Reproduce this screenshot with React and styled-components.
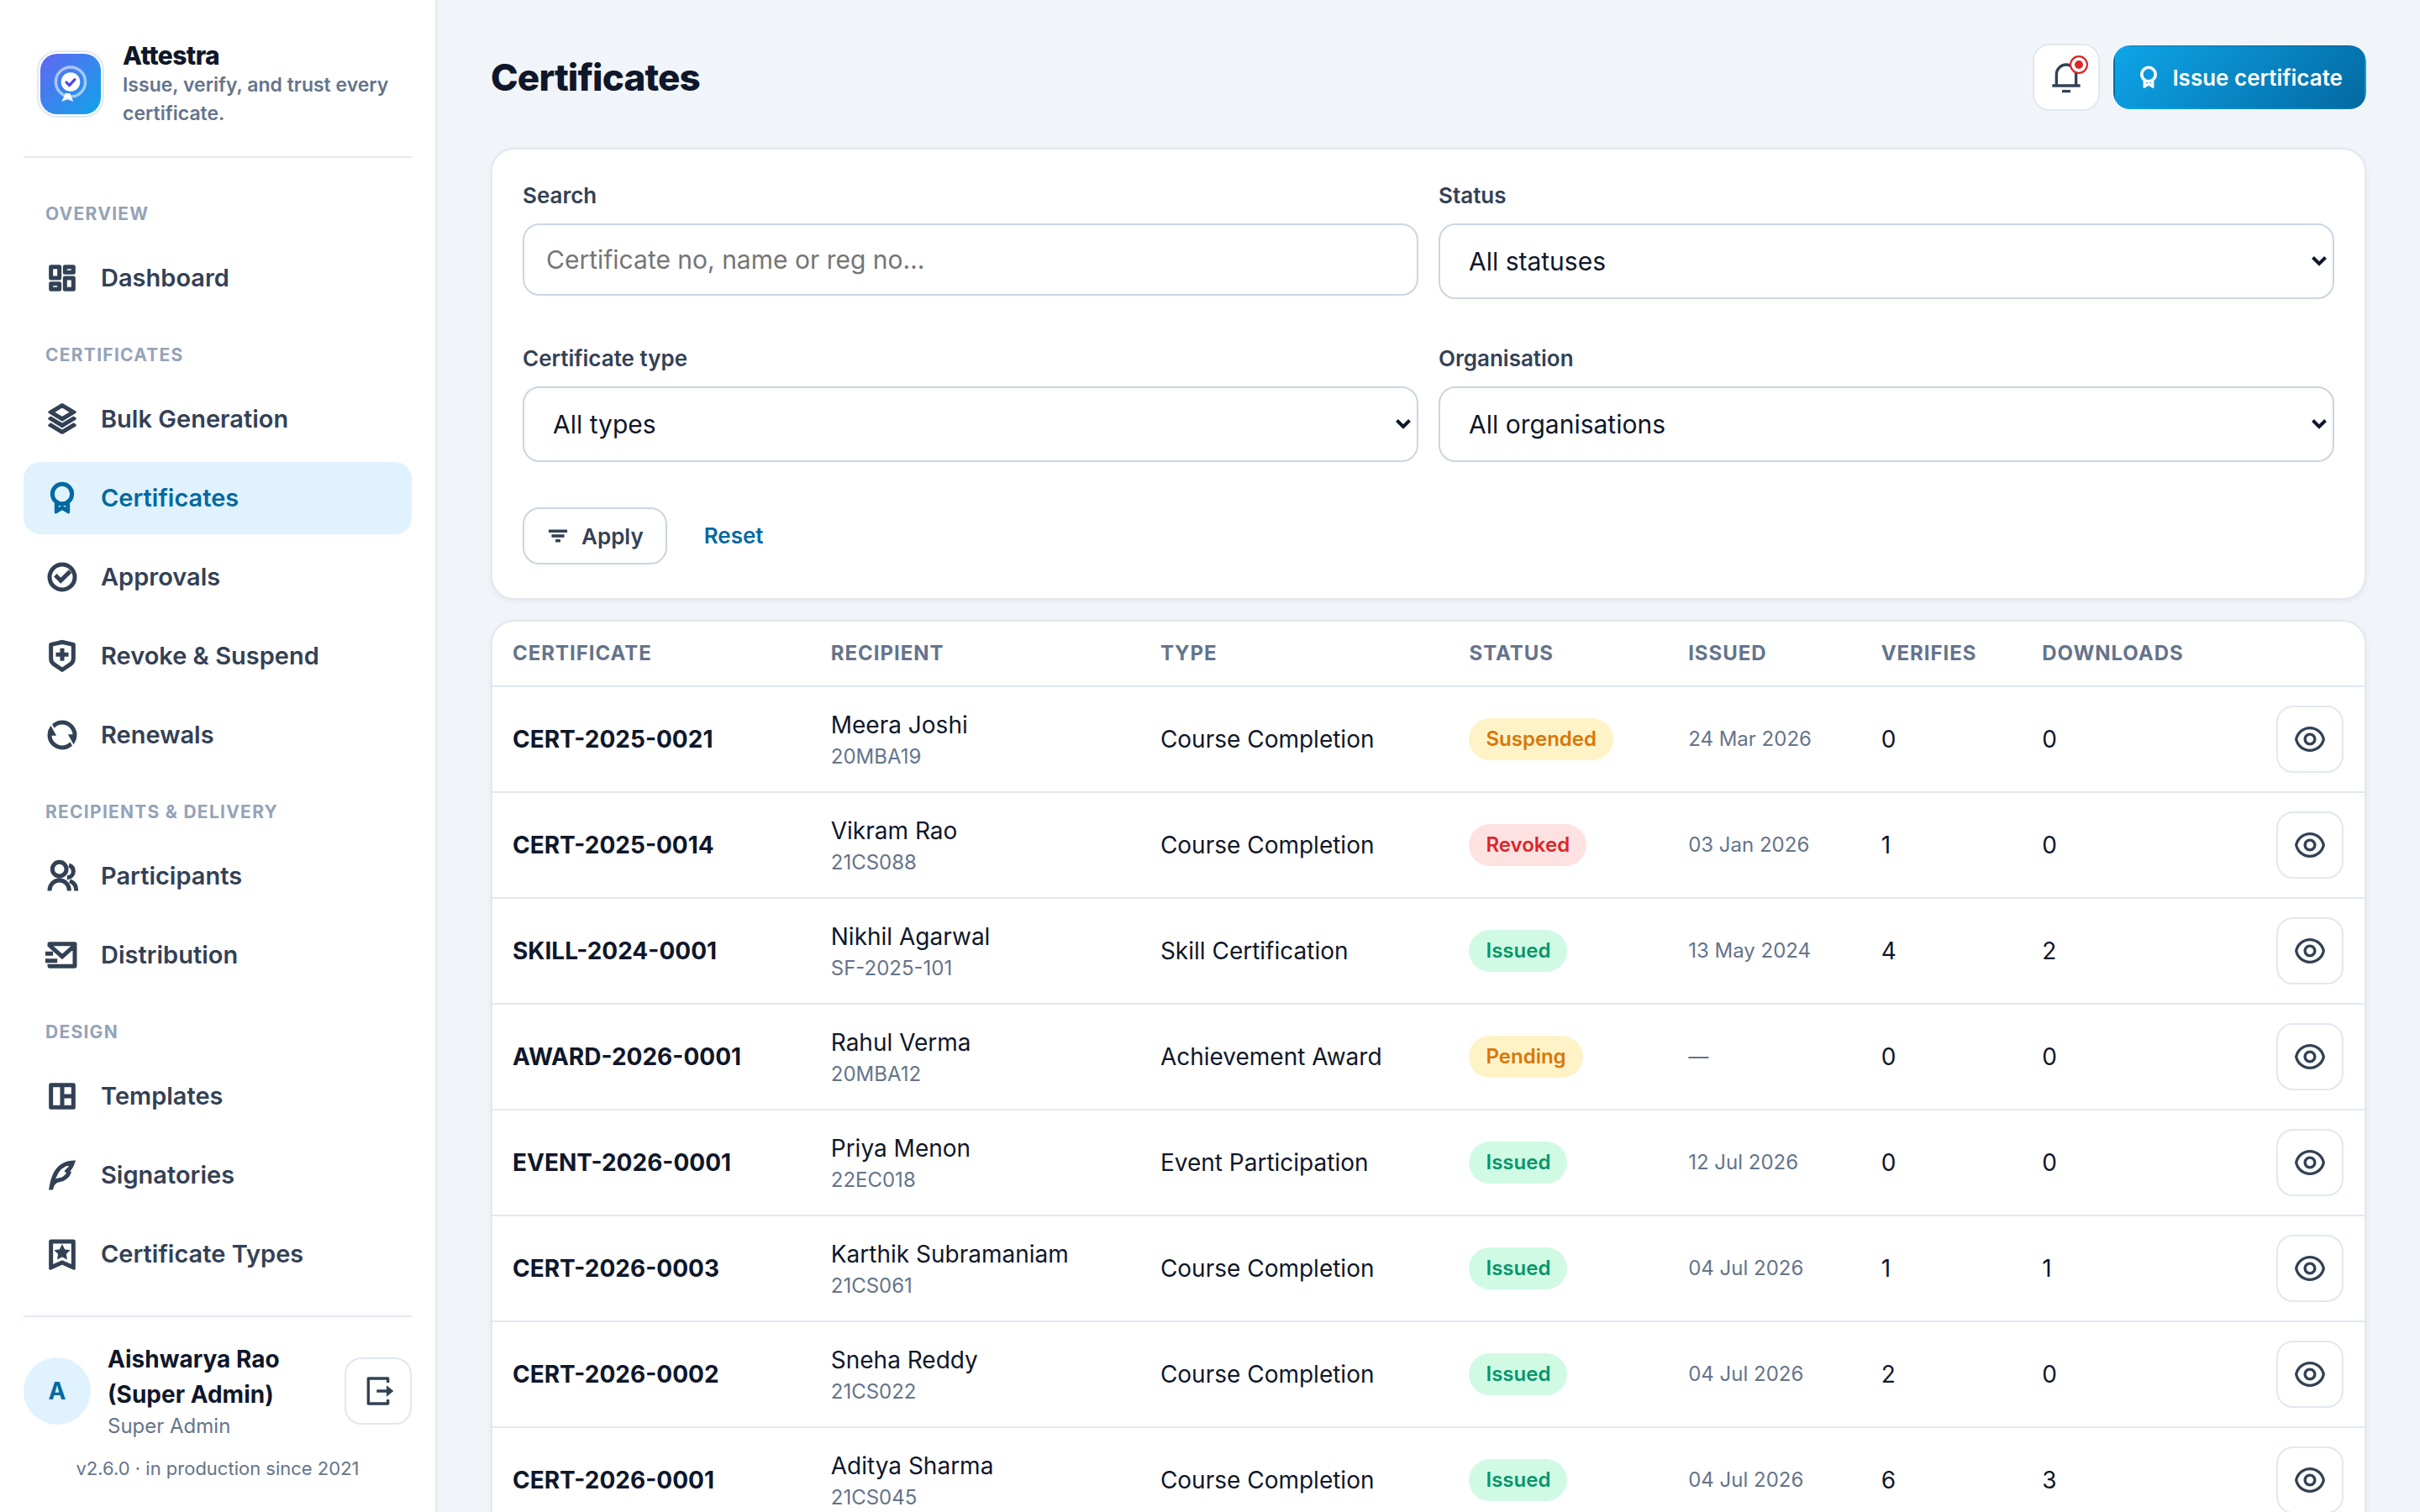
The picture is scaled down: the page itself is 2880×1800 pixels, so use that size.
import React from "react";
import styled, { createGlobalStyle } from "styled-components";
import {
  RiAwardLine,
  RiBookmark3Line,
  RiCheckboxCircleLine,
  RiDashboardLine,
  RiEyeLine,
  RiFilter3Line,
  RiGroupLine,
  RiLogoutBoxRLine,
  RiMailSendLine,
  RiNotification3Line,
  RiQuillPenLine,
  RiRefreshLine,
  RiShieldCrossLine,
  RiStackLine,
} from "react-icons/ri";

const GlobalStyle = createGlobalStyle`
  * {
    box-sizing: border-box;
  }

  body {
    margin: 0;
    background: #f1f5f9;
    color: #0f172a;
    font-family: Inter, "Liberation Sans", sans-serif;
    font-size: 28px;
    line-height: 42px;
  }

  button,
  input,
  select {
    font-family: inherit;
  }
`;

const Shell = styled.div`
  display: flex;
  height: 100vh;
`;

const Sidebar = styled.aside`
  display: flex;
  flex-direction: column;
  flex: 0 0 520px;
  padding: 0 28px 35px;
  background: #fff;
  border-right: 2px solid #e2e8f0;
`;

const Brand = styled.div`
  display: flex;
  align-items: center;
  gap: 22px;
  padding: 48px 16px 34px;
  border-bottom: 2px solid #e2e8f0;
`;

const BrandLogo = styled.div`
  flex: none;
  width: 80px;
  height: 80px;
  padding: 2px;
  border: 2px solid #e2e8f0;
  border-radius: 24px;

  svg {
    display: block;
    width: 100%;
    height: 100%;
  }
`;

const BrandName = styled.div`
  font-size: 30px;
  font-weight: 800;
  line-height: 36px;
  letter-spacing: -0.02em;
`;

const BrandTagline = styled.div`
  color: #64748b;
  font-size: 23px;
  font-weight: 600;
  line-height: 34px;
`;

const Nav = styled.nav`
  flex: 1;
  min-height: 0;
  padding-top: 18px;
  overflow: hidden;
`;

const NavLabel = styled.h2`
  margin: 36px 26px 20px;
  color: #94a3b8;
  font-size: 21px;
  font-weight: 700;
  line-height: 26px;
  letter-spacing: 0.06em;
  text-transform: uppercase;
`;

const NavList = styled.ul`
  display: grid;
  gap: 8px;
  margin: 0;
  padding: 0;
  list-style: none;
`;

const NavLink = styled.a`
  display: flex;
  align-items: center;
  gap: 26px;
  height: 86px;
  padding: 0 26px;
  border-radius: 20px;
  background: ${(p) => (p.$active ? "#e0f2fe" : "transparent")};
  color: ${(p) => (p.$active ? "#0369a1" : "#334155")};
  font-size: 29px;
  font-weight: 600;
  text-decoration: none;

  svg {
    flex: none;
    width: 40px;
    height: 40px;
    stroke-width: 1;
  }
`;

const SidebarFooter = styled.div`
  padding-top: 29px;
  border-top: 2px solid #e2e8f0;
`;

const UserRow = styled.div`
  display: flex;
  align-items: center;
  gap: 20px;
`;

const Avatar = styled.div`
  display: grid;
  place-items: center;
  flex: none;
  width: 80px;
  height: 80px;
  border-radius: 50%;
  background: #e0f2fe;
  color: #0369a1;
  font-weight: 700;
`;

const UserInfo = styled.div`
  flex: 1;
`;

const UserName = styled.div`
  font-weight: 700;
`;

const SmallMuted = styled.div`
  color: #64748b;
  font-size: 24px;
  line-height: 34px;
`;

const Version = styled.div`
  margin-top: 16px;
  color: #64748b;
  font-size: 22px;
  line-height: 34px;
  text-align: center;
`;

const IconButton = styled.button`
  position: relative;
  display: grid;
  place-items: center;
  flex: none;
  width: 80px;
  height: 80px;
  padding: 0;
  border: 2px solid #e2e8f0;
  border-radius: 20px;
  background: #fff;
  color: #334155;
  cursor: pointer;

  svg {
    width: 40px;
    height: 40px;
  }
`;

const UnreadDot = styled.span`
  position: absolute;
  top: 12px;
  right: 12px;
  width: 22px;
  height: 22px;
  border: 2px solid #dc2626;
  border-radius: 50%;
  background: #dc2626;
  box-shadow: inset 0 0 0 4px #fff;
`;

const Main = styled.main`
  flex: 1;
  min-width: 0;
  padding: 52px 64px;
  overflow-y: auto;
  scrollbar-width: none;
`;

const TopBar = styled.header`
  display: flex;
  align-items: center;
  gap: 16px;
  margin-bottom: 44px;
`;

const PageTitle = styled.h1`
  flex: 1;
  margin: 0;
  font-size: 44px;
  font-weight: 800;
  line-height: 56px;
  letter-spacing: -0.02em;
`;

const Button = styled.button`
  display: inline-flex;
  align-items: center;
  gap: 14px;
  height: ${(p) => (p.$primary ? "76px" : "68px")};
  padding: 0 26px;
  border: 2px solid ${(p) => (p.$primary ? "transparent" : "#cbd5e1")};
  border-radius: 20px;
  background: ${(p) =>
    p.$primary ? "linear-gradient(135deg, #0ea5e9, #0369a1)" : "#fff"};
  color: ${(p) => (p.$primary ? "#fff" : "#334155")};
  font-size: 26px;
  font-weight: 600;
  cursor: pointer;

  svg {
    width: 28px;
    height: 28px;
    stroke-width: 1;
  }
`;

const ResetLink = styled.a`
  padding: 0 28px;
  color: #0369a1;
  font-size: 26px;
  font-weight: 600;
  text-decoration: none;
`;

const Card = styled.section`
  border: 2px solid #e2e8f0;
  border-radius: 28px;
  background: #fff;
  box-shadow: 0 2px 6px rgba(15, 23, 42, 0.06);
`;

const FilterCard = styled(Card)`
  margin-bottom: 24px;
  padding: 34px 36px 40px;
`;

const FilterGrid = styled.div`
  display: grid;
  grid-template-columns: 1fr 1fr;
  gap: 50px 24px;
`;

const Field = styled.div`
  display: flex;
  flex-direction: column;
  gap: 12px;
`;

const FieldLabel = styled.label`
  color: #334155;
  font-size: 26px;
  font-weight: 600;
`;

const TextInput = styled.input`
  height: 86px;
  padding: 0 26px;
  border: 2px solid #cbd5e1;
  border-radius: 20px;
  background: #fff;
  color: #0f172a;
  font-size: 30px;

  &::placeholder {
    color: #757575;
  }
`;

const SelectBox = styled.div`
  display: grid;
  align-items: center;

  > * {
    grid-area: 1 / 1;
  }

  svg {
    justify-self: end;
    width: 20px;
    height: 14px;
    margin-right: 8px;
    pointer-events: none;
  }
`;

const SelectInput = styled.select`
  width: 100%;
  height: 90px;
  padding: 0 34px;
  appearance: none;
  border: 2px solid #cbd5e1;
  border-radius: 20px;
  background: #fff;
  color: #0f172a;
  font-size: 30px;
`;

const FilterActions = styled.div`
  display: flex;
  align-items: center;
  gap: 16px;
  margin-top: 54px;
`;

const TableCard = styled(Card)`
  overflow: hidden;
`;

const Table = styled.table`
  width: 100%;
  table-layout: fixed;
  border-collapse: collapse;
`;

const Col = styled.col`
  width: ${(p) => p.$width};
`;

const HeadCell = styled.th`
  height: 77px;
  padding: 0 24px;
  border-bottom: 2px solid #e2e8f0;
  color: #64748b;
  font-size: 24px;
  font-weight: 700;
  letter-spacing: 0.04em;
  text-align: left;
  text-transform: uppercase;
`;

const Cell = styled.td`
  height: 126px;
  padding: 0 24px;
  border-bottom: 2px solid #e2e8f0;
  font-weight: ${(p) => (p.$strong ? 700 : 400)};
  white-space: nowrap;
`;

const statusColors = {
  Issued: ["#d1fae5", "#059669"],
  Pending: ["#fef3c7", "#d97706"],
  Suspended: ["#fef3c7", "#d97706"],
  Revoked: ["#fee2e2", "#dc2626"],
};

const StatusPill = styled.span`
  display: inline-block;
  padding: 8px 20px;
  border-radius: 25px;
  background: ${(p) => statusColors[p.$status][0]};
  color: ${(p) => statusColors[p.$status][1]};
  font-size: 24px;
  font-weight: 600;
  line-height: 34px;
  vertical-align: middle;
`;

// full-height left column, split right column
function TemplateIcon() {
  return (
    <svg viewBox="0 0 24 24" fill="currentColor" stroke="currentColor" aria-hidden="true">
      <path
        fillRule="evenodd"
        d="M4 3h16a1 1 0 0 1 1 1v16a1 1 0 0 1-1 1H4a1 1 0 0 1-1-1V4a1 1 0 0 1 1-1zM5 5v14h6V5H5zM13 5v6h6V5h-6zM13 13v6h6v-6h-6z"
      />
    </svg>
  );
}

const navSections = [
  {
    label: "Overview",
    items: [{ label: "Dashboard", icon: RiDashboardLine }],
  },
  {
    label: "Certificates",
    items: [
      { label: "Bulk Generation", icon: RiStackLine },
      { label: "Certificates", icon: RiAwardLine, active: true },
      { label: "Approvals", icon: RiCheckboxCircleLine },
      { label: "Revoke & Suspend", icon: RiShieldCrossLine },
      { label: "Renewals", icon: RiRefreshLine },
    ],
  },
  {
    label: "Recipients & Delivery",
    items: [
      { label: "Participants", icon: RiGroupLine },
      { label: "Distribution", icon: RiMailSendLine },
    ],
  },
  {
    label: "Design",
    items: [
      { label: "Templates", icon: TemplateIcon },
      { label: "Signatories", icon: RiQuillPenLine },
      { label: "Certificate Types", icon: RiBookmark3Line },
    ],
  },
];

const columns = [
  { title: "Certificate", width: "17%" },
  { title: "Recipient", width: "17.6%" },
  { title: "Type", width: "16.5%" },
  { title: "Status", width: "11.7%" },
  { title: "Issued", width: "10.3%" },
  { title: "Verifies", width: "8.6%" },
  { title: "Downloads", width: "12.5%" },
  { title: "", width: "5.8%" },
];

const certificates = [
  { no: "CERT-2025-0021", name: "Meera Joshi", reg: "20MBA19", type: "Course Completion", status: "Suspended", issued: "24 Mar 2026", verifies: 0, downloads: 0 },
  { no: "CERT-2025-0014", name: "Vikram Rao", reg: "21CS088", type: "Course Completion", status: "Revoked", issued: "03 Jan 2026", verifies: 1, downloads: 0 },
  { no: "SKILL-2024-0001", name: "Nikhil Agarwal", reg: "SF-2025-101", type: "Skill Certification", status: "Issued", issued: "13 May 2024", verifies: 4, downloads: 2 },
  { no: "AWARD-2026-0001", name: "Rahul Verma", reg: "20MBA12", type: "Achievement Award", status: "Pending", issued: "—", verifies: 0, downloads: 0 },
  { no: "EVENT-2026-0001", name: "Priya Menon", reg: "22EC018", type: "Event Participation", status: "Issued", issued: "12 Jul 2026", verifies: 0, downloads: 0 },
  { no: "CERT-2026-0003", name: "Karthik Subramaniam", reg: "21CS061", type: "Course Completion", status: "Issued", issued: "04 Jul 2026", verifies: 1, downloads: 1 },
  { no: "CERT-2026-0002", name: "Sneha Reddy", reg: "21CS022", type: "Course Completion", status: "Issued", issued: "04 Jul 2026", verifies: 2, downloads: 0 },
  { no: "CERT-2026-0001", name: "Aditya Sharma", reg: "21CS045", type: "Course Completion", status: "Issued", issued: "04 Jul 2026", verifies: 6, downloads: 3 },
];

function Logo() {
  return (
    <svg viewBox="0 0 72 72" aria-hidden="true">
      <defs>
        <linearGradient id="logo-fill" x1="0" y1="0" x2="1" y2="1">
          <stop offset="0" stopColor="#6366f1" />
          <stop offset="1" stopColor="#0ea5e9" />
        </linearGradient>
      </defs>
      <rect width="72" height="72" rx="20" fill="url(#logo-fill)" />
      <circle cx="36" cy="33.5" r="17.6" fill="none" stroke="#fff" strokeOpacity="0.55" strokeWidth="3.5" />
      <circle cx="36" cy="33.5" r="11.3" fill="#fff" />
      <path d="M31 34l3.5 3.7 6.5-7" fill="none" stroke="#4f46e5" strokeWidth="3.2" strokeLinecap="round" strokeLinejoin="round" />
      <path d="M29.7 47h5.6l4 10-7-2.7-7 2.7z" fill="#fff" fillOpacity="0.92" />
    </svg>
  );
}

function Select({ id, label, placeholder }) {
  return (
    <Field>
      <FieldLabel htmlFor={id}>{label}</FieldLabel>
      <SelectBox>
        <SelectInput id={id} defaultValue="">
          <option value="">{placeholder}</option>
        </SelectInput>
        <svg viewBox="0 0 20 14" fill="none" stroke="#0f172a" strokeWidth="4" aria-hidden="true">
          <path d="M2.5 2.5l7.5 7.5 7.5-7.5" />
        </svg>
      </SelectBox>
    </Field>
  );
}

export default function App() {
  return (
    <Shell>
      <GlobalStyle />
      <Sidebar>
        <Brand>
          <BrandLogo>
            <Logo />
          </BrandLogo>
          <div>
            <BrandName>Attestra</BrandName>
            <BrandTagline>Issue, verify, and trust every certificate.</BrandTagline>
          </div>
        </Brand>
        <Nav>
          {navSections.map((section) => (
            <React.Fragment key={section.label}>
              <NavLabel>{section.label}</NavLabel>
              <NavList>
                {section.items.map(({ label, icon: Icon, active }) => (
                  <li key={label}>
                    <NavLink href="#" $active={active}>
                      <Icon />
                      {label}
                    </NavLink>
                  </li>
                ))}
              </NavList>
            </React.Fragment>
          ))}
        </Nav>
        <SidebarFooter>
          <UserRow>
            <Avatar>A</Avatar>
            <UserInfo>
              <UserName>Aishwarya Rao (Super Admin)</UserName>
              <SmallMuted>Super Admin</SmallMuted>
            </UserInfo>
            <IconButton aria-label="Sign out">
              <RiLogoutBoxRLine />
            </IconButton>
          </UserRow>
          <Version>v2.6.0 · in production since 2021</Version>
        </SidebarFooter>
      </Sidebar>
      <Main>
        <TopBar>
          <PageTitle>Certificates</PageTitle>
          <IconButton aria-label="Notifications">
            <RiNotification3Line />
            <UnreadDot />
          </IconButton>
          <Button $primary>
            <RiAwardLine />
            Issue certificate
          </Button>
        </TopBar>
        <FilterCard>
          <FilterGrid>
            <Field>
              <FieldLabel htmlFor="search">Search</FieldLabel>
              <TextInput id="search" placeholder="Certificate no, name or reg no…" />
            </Field>
            <Select id="status" label="Status" placeholder="All statuses" />
            <Select id="type" label="Certificate type" placeholder="All types" />
            <Select id="organisation" label="Organisation" placeholder="All organisations" />
          </FilterGrid>
          <FilterActions>
            <Button>
              <RiFilter3Line />
              Apply
            </Button>
            <ResetLink href="#">Reset</ResetLink>
          </FilterActions>
        </FilterCard>
        <TableCard>
          <Table>
            <colgroup>
              {columns.map((column) => (
                <Col key={column.title} $width={column.width} />
              ))}
            </colgroup>
            <thead>
              <tr>
                {columns.map((column) => (
                  <HeadCell key={column.title}>{column.title}</HeadCell>
                ))}
              </tr>
            </thead>
            <tbody>
              {certificates.map((cert) => (
                <tr key={cert.no}>
                  <Cell $strong>{cert.no}</Cell>
                  <Cell>
                    {cert.name}
                    <SmallMuted>{cert.reg}</SmallMuted>
                  </Cell>
                  <Cell>{cert.type}</Cell>
                  <Cell>
                    <StatusPill $status={cert.status}>{cert.status}</StatusPill>
                  </Cell>
                  <Cell>
                    <SmallMuted>{cert.issued}</SmallMuted>
                  </Cell>
                  <Cell>{cert.verifies}</Cell>
                  <Cell>{cert.downloads}</Cell>
                  <Cell>
                    <IconButton aria-label={`View ${cert.no}`}>
                      <RiEyeLine />
                    </IconButton>
                  </Cell>
                </tr>
              ))}
            </tbody>
          </Table>
        </TableCard>
      </Main>
    </Shell>
  );
}
